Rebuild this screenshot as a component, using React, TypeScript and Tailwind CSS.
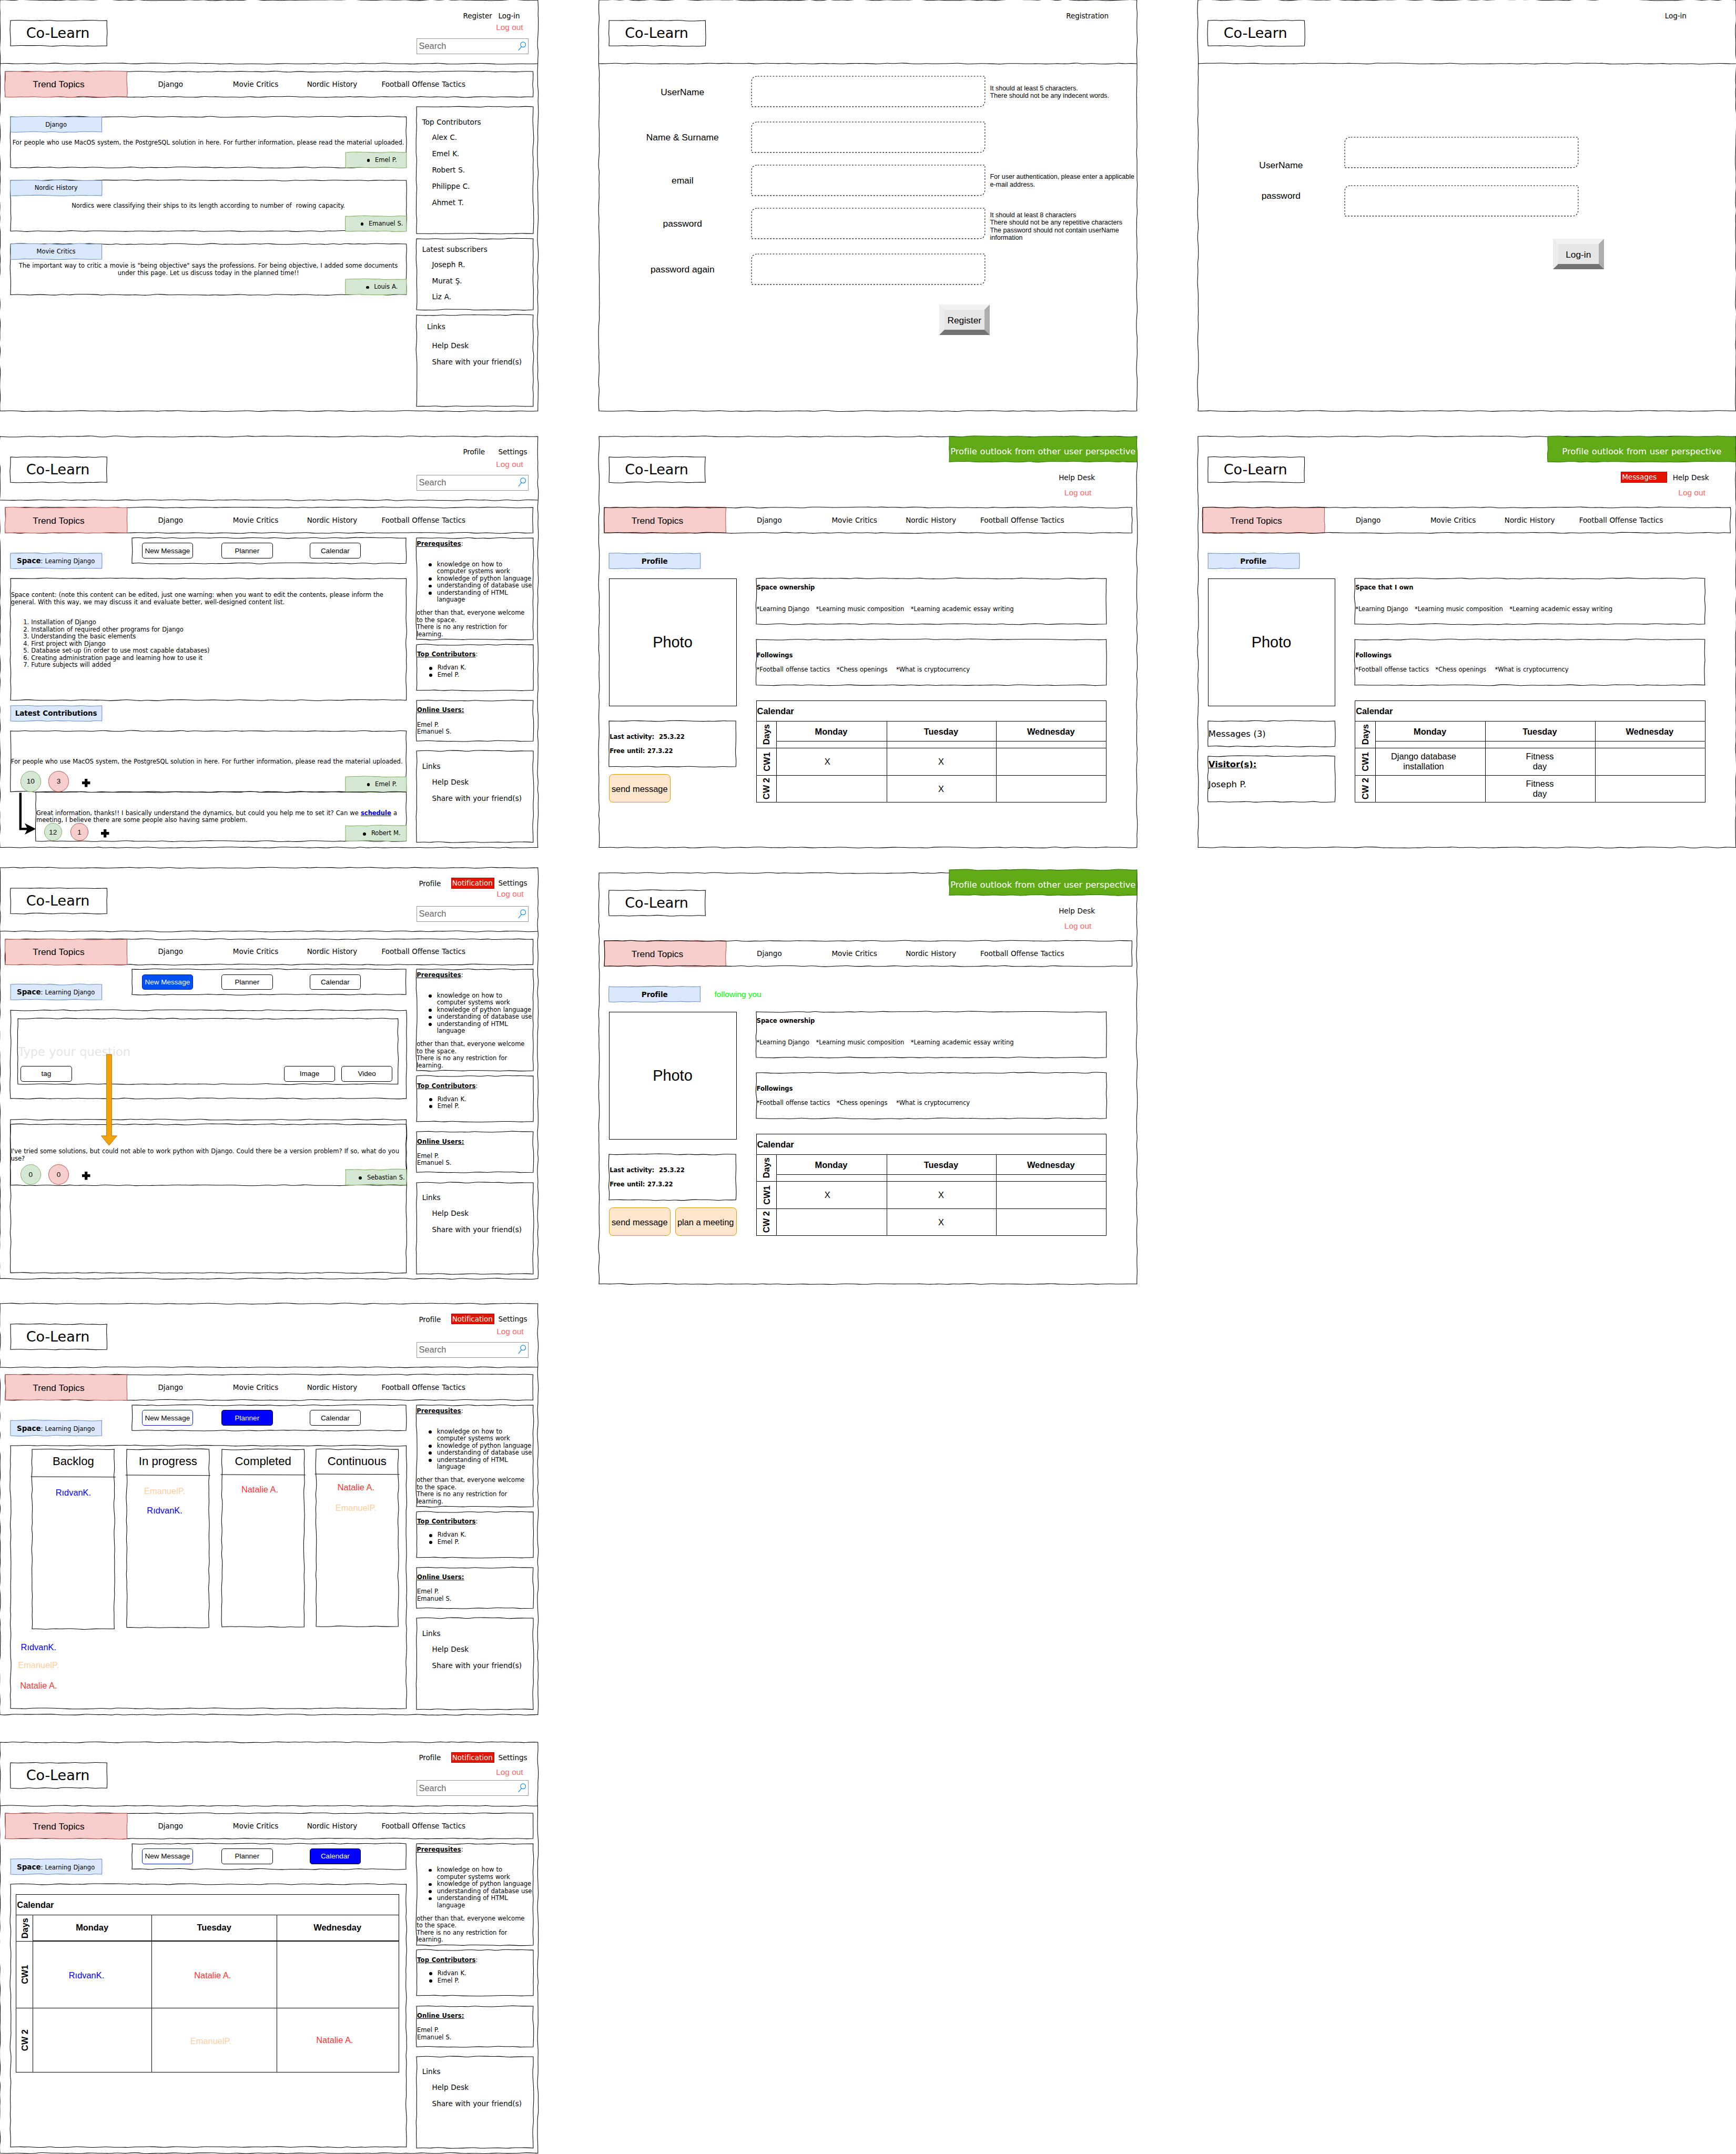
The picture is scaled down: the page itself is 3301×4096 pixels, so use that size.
import type { ReactNode } from "react";
import clsx from "clsx";

const HELV = "font-['Liberation_Sans',Arial,sans-serif] tracking-normal [word-spacing:0]";

/* ---------- hand-drawn outlines ---------- */

function makeRandom(seed: number) {
  let s = seed % 2147483647;
  if (s <= 0) s += 2147483646;
  return () => {
    s = (s * 16807) % 2147483647;
    return s / 2147483647;
  };
}

function wobble(x1: number, y1: number, x2: number, y2: number, rnd: () => number) {
  const len = Math.hypot(x2 - x1, y2 - y1);
  const n = Math.max(2, Math.round(len / 13));
  const nx = -(y2 - y1) / len;
  const ny = (x2 - x1) / len;
  const pts: [number, number][] = [];
  for (let i = 1; i < n; i++) {
    const t = (i + (rnd() - 0.5) * 0.5) / n;
    const o = (rnd() - 0.5) * 2.3;
    pts.push([x1 + (x2 - x1) * t + nx * o, y1 + (y2 - y1) * t + ny * o]);
  }
  let d = "";
  pts.forEach((p, i) => {
    const q = pts[i + 1] ?? [x2, y2];
    const end = pts[i + 1] ? [(p[0] + q[0]) / 2, (p[1] + q[1]) / 2] : q;
    d += `Q${p[0].toFixed(2)} ${p[1].toFixed(2)} ${end[0].toFixed(2)} ${end[1].toFixed(2)}`;
  });
  return d;
}

type SketchProps = {
  w: number;
  h: number;
  className?: string;
  stroke?: string;
  fill?: string;
  seed?: number;
  over?: boolean;
  children?: ReactNode;
};

function Sketch({ w, h, className, stroke = "#000", fill = "none", seed = 1, over, children }: SketchProps) {
  const rnd = makeRandom(seed * 7919 + w * 31 + h * 17);
  const d =
    "M0 0" + wobble(0, 0, w, 0, rnd) + wobble(w, 0, w, h, rnd) + wobble(w, h, 0, h, rnd) + wobble(0, h, 0, 0, rnd) + "Z";
  return (
    <div className={clsx("relative isolate shrink-0", className)}>
      <svg
        viewBox={`0 0 ${w} ${h}`}
        preserveAspectRatio="none"
        className={clsx("pointer-events-none absolute inset-0 size-full overflow-visible", over ? "z-10" : "-z-10")}
      >
        <path d={d} fill={fill} stroke={stroke} strokeWidth="1.1" />
      </svg>
      {children}
    </div>
  );
}

function Rule({ w, seed = 3, straight }: { w: number; seed?: number; straight?: boolean }) {
  return (
    <svg
      viewBox={`0 0 ${w} 10`}
      width={w}
      height={10}
      preserveAspectRatio="none"
      className="-mb-[9px] block max-w-none shrink-0 overflow-visible"
    >
      <path
        d={straight ? `M-2.5 0L${w + 2.5} 0.8` : "M0 0" + wobble(0, 0, w, 0, makeRandom(seed * 977))}
        fill="none"
        stroke="#000"
        strokeWidth="1.1"
      />
    </svg>
  );
}

function Frame({ seed, children, className }: { seed: number; children: ReactNode; className?: string }) {
  return (
    <Sketch w={1060} h={810} seed={seed} className={clsx("flow-root h-[810px] w-[1060px]", className)}>
      {children}
    </Sketch>
  );
}

/* ---------- shared pieces ---------- */

function Logo({ seed = 1 }: { seed?: number }) {
  return (
    <Sketch
      w={190}
      h={50}
      seed={seed}
      className="mt-[40px] ml-[20px] flex h-[50px] w-[190px] items-center justify-center pt-[1px] pr-[3px] text-[28px]"
    >
      Co-Learn
    </Sketch>
  );
}

function SearchBox() {
  return (
    <div className="flex h-[31px] w-[221px] items-center justify-between border border-[#999] pr-[4px] pl-[4px]">
      <span className={clsx(HELV, "text-[17px] text-[#666]")}>Search</span>
      <svg viewBox="0 0 16 19" className="h-[19px] w-[16px]" fill="none" stroke="#008cff" strokeWidth="1.15">
        <circle cx="10" cy="6" r="5.1" />
        <path d="M6.8 10L0.8 17.8" />
      </svg>
    </div>
  );
}

const logOut = clsx(HELV, "text-[16px] leading-[18px] text-[#ff6666]");

function RedBadge({ children, className }: { children: ReactNode; className?: string }) {
  return (
    <span className={clsx("flex h-[21px] items-center border border-[#b20000] bg-[#e51400] pl-[1px] text-white", className)}>
      {children}
    </span>
  );
}

function Header({ links, logoutClass, seed = 1 }: { links: ReactNode; logoutClass: string; seed?: number }) {
  return (
    <>
      <div className="flex h-[125px]">
        <Logo seed={seed} />
        <div className="ml-auto flex w-[240px] flex-col pt-[20px] text-[14px]">
          <div className="flex h-[20px] items-center">{links}</div>
          <div className={clsx("h-[35px]", logoutClass)}>
            <div className={logOut}>Log out</div>
          </div>
          <SearchBox />
        </div>
      </div>
      <Rule w={1060} seed={seed + 5} />
    </>
  );
}

const userLinks = (
  <>
    <span className="w-[68.5px] pt-[1px] pl-[5px]">Profile</span>
    <RedBadge className="w-[85px]">Notification</RedBadge>
    <span className="ml-[8px]">Settings</span>
  </>
);

function Nav({ seed = 1, over }: { seed?: number; over?: boolean }) {
  return (
    <Sketch w={1040} h={50} seed={seed} over={over} className="ml-[10px] flex h-[50px] w-[1040px] items-center text-[14px]">
      <Sketch
        w={240}
        h={50}
        seed={seed + 2}
        fill="#f8cecc"
        stroke="#b85450"
        className={clsx(HELV, "flex h-[50px] w-[240px] items-center justify-center pt-[1px] pr-[30px] text-[18px]")}
      >
        Trend Topics
      </Sketch>
      <span className="ml-[61px] w-[147.5px]">Django</span>
      <span className="w-[146px]">Movie Critics</span>
      <span className="w-[147px]">Nordic History</span>
      <span>Football Offense Tactics</span>
    </Sketch>
  );
}

function BlueTag({ children, className, seed = 1 }: { children: ReactNode; className?: string; seed?: number }) {
  return (
    <Sketch
      w={180}
      h={30}
      seed={seed}
      fill="#dae8fc"
      stroke="#6c8ebf"
      className={clsx("flex h-[30px] w-[180px] items-center justify-center pt-[1px]", className)}
    >
      {children}
    </Sketch>
  );
}

function Bullet({ children, className }: { children: ReactNode; className?: string }) {
  return (
    <span
      className={clsx(
        "relative block before:absolute before:top-[4.5px] before:-left-[16px] before:size-[6px] before:rounded-full before:bg-black",
        className,
      )}
    >
      {children}
    </span>
  );
}

function Author({ children, className, seed = 1 }: { children: ReactNode; className?: string; seed?: number }) {
  return (
    <Sketch
      w={120}
      h={30}
      seed={seed}
      fill="#d5e8d4"
      stroke="#82b366"
      className={clsx("ml-auto flex h-[30px] w-[120px] items-center justify-center pt-[1px] pl-[40px]", className)}
    >
      <Bullet>{children}</Bullet>
    </Sketch>
  );
}

function Vote({ kind, size, children, className }: { kind: "up" | "down"; size: "lg" | "sm"; children: ReactNode; className?: string }) {
  return (
    <span
      className={clsx(
        HELV,
        "flex items-center justify-center rounded-full border text-[14px] leading-none",
        kind === "up" ? "border-[#82b366] bg-[#d5e8d4]" : "border-[#b85450] bg-[#f8cecc]",
        size === "lg" ? "size-[41px]" : "size-[35px]",
        className,
      )}
    >
      {children}
    </span>
  );
}

function Plus({ className }: { className?: string }) {
  return (
    <svg viewBox="0 0 16 16" className={clsx("size-[16px] shrink-0 overflow-visible", className)}>
      <path d="M5.3 0h5.4v5.3H16v5.4h-5.3V16H5.3v-5.3H0V5.3h5.3z" fill="#000" />
    </svg>
  );
}

/* ---------- side panels ---------- */

function LinksPanel({ home }: { home?: boolean }) {
  return (
    <Sketch
      w={230}
      h={180}
      seed={home ? 4 : 9}
      className={clsx(
        "h-[180px] w-[230px] text-[14px] leading-[20px] tracking-[0.003em]",
        home ? "mt-[10px] pt-[14px]" : "mt-[20px] pt-[20px]",
      )}
    >
      <div className={home ? "mb-[11px] pl-[21px]" : "mb-[5px] pl-[11.5px]"}>Links</div>
      <div className="pl-[31px] leading-[32px]">Help Desk</div>
      <div className="pl-[31px] leading-[32px]">Share with your friend(s)</div>
    </Sketch>
  );
}

function PeoplePanel({ w, h, title, names, className }: { w: number; h: number; title: string; names: string[]; className: string }) {
  return (
    <Sketch w={w} h={h} className={clsx("w-[230px] text-[14px] leading-[20px] tracking-normal", className)}>
      <div className="mb-[4px] pl-[11.5px]">{title}</div>
      {names.map((n) => (
        <div key={n} className="pl-[31px] leading-[32px]">
          {n}
        </div>
      ))}
    </Sketch>
  );
}

function SpaceAside() {
  return (
    <aside className="ml-[20px] w-[230px] pt-[10px] text-[12px] leading-[14px] whitespace-nowrap">
      <Sketch w={230} h={200} seed={2} className="h-[200px] w-[230px] pt-[5px] pl-[0.5px]">
        <p>
          <b className="tracking-[0.01em] underline">Prerequsites</b>:
        </p>
        <div className="mt-[26px] mb-[12px] pl-[40px]">
          <Bullet>
            knowledge on how to
            <br />
            computer systems work
          </Bullet>
          <Bullet>knowledge of python language</Bullet>
          <Bullet>understanding of database use</Bullet>
          <Bullet>
            understanding of HTML
            <br />
            language
          </Bullet>
        </div>
        <p>
          other than that, everyone welcome
          <br />
          to the space.
          <br />
          There is no any restriction for
          <br />
          learning.
        </p>
      </Sketch>
      <Sketch w={230} h={90} seed={3} className="mt-[10px] h-[90px] w-[230px] pt-[13px] pl-[1.5px]">
        <p>
          <b className="tracking-[0.01em] underline">Top Contributors</b>:
        </p>
        <div className="mt-[12px] pl-[40px]">
          <Bullet>Rıdvan K.</Bullet>
          <Bullet>Emel P.</Bullet>
        </div>
      </Sketch>
      <Sketch w={230} h={80} seed={4} className="mt-[20px] h-[80px] w-[230px] pt-[13px] pl-[1.5px]">
        <p>
          <b className="tracking-[0.01em] underline">Online Users:</b>
        </p>
        <p className="mt-[14px]">
          Emel P.
          <br />
          Emanuel S.
        </p>
      </Sketch>
      <LinksPanel />
    </aside>
  );
}

/* ---------- space toolbar ---------- */

function ToolButton({ children, className }: { children: ReactNode; className: string }) {
  return (
    <span
      className={clsx(HELV, "flex h-[31px] w-[101px] items-center justify-center rounded-[5px] border pt-[1px] text-[14px]", className)}
    >
      {children}
    </span>
  );
}

const plain = "border-black bg-white text-black";

function Toolbar({ styles, seed = 1 }: { styles: [string, string, string]; seed?: number }) {
  return (
    <div className="flex h-[60px]">
      <BlueTag className="mt-[30px] pr-[1px] text-[12px]" seed={seed}>
        <span>
          <b className="text-[14px]">Space</b>: Learning Django
        </span>
      </BlueTag>
      <Sketch w={540} h={50} seed={seed} className="ml-[60px] flex h-[50px] w-[540px] items-center pl-[19px]">
        <ToolButton className={styles[0]}>New Message</ToolButton>
        <ToolButton className={clsx("ml-[56px]", styles[1])}>Planner</ToolButton>
        <ToolButton className={clsx("ml-[72.5px]", styles[2])}>Calendar</ToolButton>
      </Sketch>
    </div>
  );
}

/* ---------- calendar ---------- */

function Cell({ children, className }: { children?: ReactNode; className?: string }) {
  return <div className={clsx("flex items-center justify-center border-black text-center", className)}>{children}</div>;
}

function Turned({ children, last }: { children: ReactNode; last?: boolean }) {
  return (
    <Cell className={clsx("border-r pl-[1px] font-bold", !last && "border-b")}>
      <span className="-rotate-90 whitespace-nowrap">{children}</span>
    </Cell>
  );
}

function ProfileCalendar({ rows }: { rows: [ReactNode, ReactNode][] }) {
  return (
    <div className={clsx(HELV, "mt-[30px] h-[201px] w-[691px] border border-black text-[17px] leading-[20px]")}>
      <div className="flex h-[40px] items-center border-b border-black pt-[1px] pl-[1px] font-bold">Calendar</div>
      <div className="grid h-[159px] grid-cols-[40px_217px_216px_216px] grid-rows-[53px_54px_52px]">
        <Turned>Days</Turned>
        {["Monday", "Tuesday", "Wednesday"].map((d, i) => (
          <div key={d} className={clsx("border-b border-black", i < 2 && "border-r")}>
            <div className="flex h-[40px] items-center justify-center border-b border-black pt-[2px] pr-[2px] font-bold">{d}</div>
          </div>
        ))}
        <Turned>CW1</Turned>
        <Cell className={clsx("border-r border-b", rows[0][0] === "X" ? "pr-[17px]" : "pr-[27px]")}>{rows[0][0]}</Cell>
        <Cell className="border-r border-b pr-[2px]">{rows[0][1]}</Cell>
        <Cell className="border-b" />
        <Turned last>CW 2</Turned>
        <Cell className="border-r">{rows[1][0]}</Cell>
        <Cell className="border-r pt-[1px] pr-[2px]">{rows[1][1]}</Cell>
        <Cell />
      </div>
    </div>
  );
}

const ridvan = <span className="text-[#0000ff]">RıdvanK.</span>;
const emanuel = <span className="text-[#ffce9f]">EmanuelP.</span>;
const natalie = <span className="text-[#ff3333]">Natalie A.</span>;

/* ---------- screens ---------- */

function HomePost({ tag, author, seed, children }: { tag: string; author: string; seed: number; children: ReactNode }) {
  return (
    <Sketch w={780} h={100} seed={seed} className="flex h-[100px] w-[780px] flex-col text-[12px] leading-[14px]">
      <BlueTag seed={seed}>{tag}</BlueTag>
      <div className="flex h-[40px] items-center justify-center pt-[2px] text-center whitespace-nowrap">
        <p>{children}</p>
      </div>
      <Author seed={seed}>{author}</Author>
    </Sketch>
  );
}

function HomeScreen() {
  return (
    <Frame seed={1}>
      <Header
        seed={1}
        logoutClass="pt-[4.5px] pl-[157px]"
        links={
          <>
            <span className="box-content w-[69.5px] pt-[1px] pl-[92px]">Register</span>
            <span className="pt-[1px]">Log-in</span>
          </>
        }
      />
      <div className="h-[14px]" />
      <Nav seed={1} />
      <div className="flex">
        <div className="flex w-[800px] flex-col gap-[25px] pt-[40px] pl-[20px]">
          <HomePost tag="Django" author="Emel P." seed={1}>
            For people who use MacOS system, the PostgreSQL solution in here. For further information, please read the material
            uploaded.
          </HomePost>
          <HomePost tag="Nordic History" author="Emanuel S." seed={2}>
            Nordics were classifying their ships to its length according to number of&nbsp; rowing capacity.
          </HomePost>
          <HomePost tag="Movie Critics" author="Louis A." seed={3}>
            The important way to critic a movie is "being objective" says the professions. For being objective, I added some
            documents
            <br />
            under this page. Let us discuss today in the planned time!!
          </HomePost>
        </div>
        <aside className="ml-[20px] w-[230px] pt-[20px]">
          <PeoplePanel
            w={230}
            h={250}
            className="h-[250px] pt-[21px]"
            title="Top Contributors"
            names={["Alex C.", "Emel K.", "Robert S.", "Philippe C.", "Ahmet T."]}
          />
          <PeoplePanel
            w={230}
            h={140}
            className="mt-[10px] h-[140px] pt-[11px]"
            title="Latest subscribers"
            names={["Joseph R.", "Murat Ş.", "Liz A."]}
          />
          <LinksPanel home />
        </aside>
      </div>
    </Frame>
  );
}

function SpaceScreen() {
  return (
    <Frame seed={2} className="mt-[50px]">
      <Header
        seed={2}
        logoutClass="pt-[5px] pl-[157px]"
        links={
          <>
            <span className="box-content w-[69.5px] pl-[92px]">Profile</span>
            <span>Settings</span>
          </>
        }
      />
      <div className="h-[14px]" />
      <Nav seed={2} />
      <div className="flex">
        <div className="w-[800px] pt-[10px] pl-[20px] text-[12px] leading-[14px] whitespace-nowrap">
          <Toolbar styles={[plain, plain, plain]} seed={2} />
          <Sketch w={780} h={240} seed={2} className="mt-[20px] h-[240px] w-[780px] pt-[25.5px] pl-[1px]">
            <p>
              Space content: (note this content can be edited, just one warning: when you want to edit the contents, please
              inform the
              <br />
              general. With this way, we may discuss it and evaluate better, well-designed content list.
            </p>
            <ol className="mt-[26px] list-decimal pl-[40px]">
              <li>Installation of Django</li>
              <li>Installation of required other programs for Django</li>
              <li>Understanding the basic elements</li>
              <li>First project with Django</li>
              <li>Database set-up (in order to use most capable databases)</li>
              <li>Creating administration page and learning how to use it</li>
              <li>Future subjects will added</li>
            </ol>
          </Sketch>
          <BlueTag className="mt-[10px] text-[14px] font-bold" seed={5}>
            Latest Contributions
          </BlueTag>
          <Sketch w={780} h={120} seed={6} className="mt-[20px] h-[120px] w-[780px]">
            <p className="h-[80px] pt-[54px] pl-[1px]">
              For people who use MacOS system, the PostgreSQL solution in here. For further information, please read the material
              uploaded.
            </p>
            <div className="flex h-[40px] items-end pl-[19.5px]">
              <Vote kind="up" size="lg">
                10
              </Vote>
              <Vote kind="down" size="lg" className="ml-[14px]">
                3
              </Vote>
              <Plus className="mb-[10px] ml-[26px]" />
              <Author seed={3}>Emel P.</Author>
            </div>
            <svg
              viewBox="0 0 60 90"
              className="absolute top-[120px] left-0 h-[90px] w-[60px] overflow-visible"
              fill="none"
              stroke="#000"
              strokeWidth="4.6"
            >
              <path d="M19.5 1.5V72.8H36" />
              <path d="M50 72.8L28 84L33.5 72.8L28 61.6Z" fill="#000" stroke="none" />
            </svg>
          </Sketch>
          <Sketch w={730} h={97} seed={6} className="ml-[50px] h-[97px] w-[730px]">
            <p className="h-[62px] pt-[35.5px] pl-[1px]">
              Great information, thanks!! I basically understand the dynamics, but could you help me to set it? Can we{" "}
              <b className="text-[#0000ee] underline">schedule</b> a
              <br />
              meeting, I believe there are some people also having same problem.
            </p>
            <div className="flex h-[35px] items-end pl-[16.5px]">
              <Vote kind="up" size="sm">
                12
              </Vote>
              <Vote kind="down" size="sm" className="ml-[17px]">
                1
              </Vote>
              <Plus className="mb-[7.5px] ml-[25px]" />
              <Author seed={4}>Robert M.</Author>
            </div>
          </Sketch>
        </div>
        <SpaceAside />
      </div>
    </Frame>
  );
}

function NewMessageScreen() {
  return (
    <Frame seed={3} className="mt-[40px]">
      <Header seed={3} logoutClass="pt-[2.5px] pl-[158px]" links={userLinks} />
      <div className="h-[14px]" />
      <Nav seed={3} />
      <div className="flex">
        <div className="relative w-[800px] pt-[10px] pl-[20px] text-[12px] leading-[14px] whitespace-nowrap">
          <Toolbar styles={["border-[#001dbc] bg-[#0050ef] text-white", plain, plain]} seed={3} />
          <Sketch w={780} h={174} seed={3} className="mt-[20px] h-[174px] w-[780px] pt-[17px] pl-[15px]">
            <Sketch w={749} h={129} seed={2} className="h-[129px] w-[749px]">
              <p className="h-[93px] pt-[51px] text-[23.3px] leading-[30px] text-[#e6e6e6]">Type your question</p>
              <div className="flex pl-[5px]">
                <ToolButton className={plain}>tag</ToolButton>
                <ToolButton className={clsx("ml-[418px]", plain)}>Image</ToolButton>
                <ToolButton className={clsx("ml-[12px]", plain)}>Video</ToolButton>
              </div>
            </Sketch>
          </Sketch>
          <Sketch w={780} h={302} seed={4} className="mt-[42px] h-[302px] w-[780px] pt-[9px]">
            <Sketch w={780} h={120} seed={5} className="h-[120px] w-[780px]">
              <p className="h-[80px] pt-[47px] pl-[1px]">
                I've tried some solutions, but could not able to work python with Django. Could there be a version problem? If so,
                what do you
                <br />
                use?
              </p>
              <div className="flex h-[40px] items-end pl-[19.5px]">
                <Vote kind="up" size="lg">
                  0
                </Vote>
                <Vote kind="down" size="lg" className="ml-[14px]">
                  0
                </Vote>
                <Plus className="mb-[10px] ml-[26px]" />
                <Author seed={5}>Sebastian S.</Author>
              </div>
            </Sketch>
          </Sketch>
          <svg viewBox="0 0 32 180" className="absolute top-[178px] left-[199px] h-[180px] w-[32px] overflow-visible">
            <path d="M11 0H21V160.5H31.5L16 179.5L0.5 160.5H11Z" fill="#f0a30a" stroke="#bd7000" strokeWidth="1" />
          </svg>
        </div>
        <SpaceAside />
      </div>
    </Frame>
  );
}

function PlannerColumn({
  title,
  h,
  className,
  bodyClass,
  headClass,
  children,
}: {
  title: string;
  h: number;
  className: string;
  bodyClass: string;
  headClass: string;
  children: ReactNode;
}) {
  return (
    <Sketch w={162} h={h} seed={h} className={clsx("w-[162px]", className)}>
      <div className={clsx("pt-[1px] text-center text-[23px] leading-[45px]", headClass)}>{title}</div>
      <Rule w={162} straight />
      <div className={clsx("flex flex-col items-center leading-[20px]", bodyClass)}>{children}</div>
    </Sketch>
  );
}

function PlannerScreen() {
  return (
    <Frame seed={4} className="mt-[49px]">
      <Header seed={4} logoutClass="pt-[5px] pl-[158px]" links={userLinks} />
      <div className="h-[14px]" />
      <Nav seed={4} />
      <div className="flex">
        <div className="w-[800px] pt-[10px] pl-[20px] whitespace-nowrap">
          <Toolbar
            styles={["border-[#001dbc] bg-white text-black", "border-black bg-[#0000ff] text-white", plain]}
            seed={4}
          />
          <Sketch w={780} h={518} seed={4} className={clsx(HELV, "mt-[20px] h-[518px] w-[780px] pt-[7px] text-[17px]")}>
            <div className="flex h-[354px] items-start pl-[43px]">
              <PlannerColumn title="Backlog" h={354} className="h-[354px]" headClass="h-[54px]" bodyClass="pt-[20px]">
                {ridvan}
              </PlannerColumn>
              <PlannerColumn
                title="In progress"
                h={351}
                className="ml-[24.5px] h-[351px]"
                headClass="h-[51px]"
                bodyClass="gap-[19px] pt-[20px] pr-[13px]"
              >
                {emanuel}
                {ridvan}
              </PlannerColumn>
              <PlannerColumn
                title="Completed"
                h={350}
                className="ml-[25.5px] h-[350px]"
                headClass="h-[49.5px]"
                bodyClass="pt-[19px] pr-[13px]"
              >
                {natalie}
              </PlannerColumn>
              <PlannerColumn
                title="Continuous"
                h={349}
                className="ml-[23px] h-[349px]"
                headClass="h-[49px]"
                bodyClass="gap-[21px] pt-[15px] pr-[4px]"
              >
                {natalie}
                {emanuel}
              </PlannerColumn>
            </div>
            <div className="flex w-[111px] flex-col items-center pt-[26px] leading-[20px]">
              {ridvan}
              <span className="mt-[15px]">{emanuel}</span>
              <span className="mt-[21px]">{natalie}</span>
            </div>
          </Sketch>
        </div>
        <SpaceAside />
      </div>
    </Frame>
  );
}

function CalendarScreen() {
  return (
    <Frame seed={5} className="mt-[54px]">
      <Header seed={5} logoutClass="pt-[10px] pl-[157px]" links={userLinks} />
      <div className="h-[14px]" />
      <Nav seed={5} />
      <div className="flex">
        <div className="w-[800px] pt-[10px] pl-[20px] whitespace-nowrap">
          <Toolbar
            styles={["border-[#001dbc] bg-white text-black", plain, "border-black bg-[#0000ff] text-white"]}
            seed={5}
          />
          <Sketch w={780} h={518} seed={5} className={clsx(HELV, "mt-[20px] h-[518px] w-[780px] pt-[20px] pl-[11px]")}>
            <div className="h-[351px] w-[755px] border border-black text-[17px] leading-[20px]">
              <div className="flex h-[40px] items-center border-b border-black pt-[2px] pl-[1px] font-bold">Calendar</div>
              <div className="grid h-[309px] grid-cols-[33px_234px_247px_239px] grid-rows-[52px_131px_126px]">
                <Turned>Days</Turned>
                <Cell className="border-r border-b-[2.2px] pr-[1px] font-bold">Monday</Cell>
                <Cell className="border-r border-b-[2.2px] pr-[1px] font-bold">Tuesday</Cell>
                <Cell className="border-b-[2.2px] pr-[2px] font-bold">Wednesday</Cell>
                <Turned>CW1</Turned>
                <Cell className="border-r border-b pt-[4px] pr-[23px]">{ridvan}</Cell>
                <Cell className="border-r border-b pt-[4px] pr-[7px]">{natalie}</Cell>
                <Cell className="border-b" />
                <Turned last>CW 2</Turned>
                <Cell className="border-r" />
                <Cell className="border-r pt-[4px] pr-[14px]">{emanuel}</Cell>
                <Cell className="pr-[13px]">{natalie}</Cell>
              </div>
            </div>
          </Sketch>
        </div>
        <SpaceAside />
      </div>
    </Frame>
  );
}

function DashedField({ className }: { className?: string }) {
  return (
    <svg viewBox="0 0 460 60" className={clsx("block h-[60px] w-[460px] shrink-0 overflow-visible", className)}>
      <path
        d="M12 0H460V48Q460 60 448 60H0V12Q0 0 12 0Z"
        fill="none"
        stroke="#000"
        strokeWidth="1.1"
        strokeDasharray="3 3"
      />
    </svg>
  );
}

function BevelButton({ children, className }: { children: ReactNode; className?: string }) {
  return (
    <div
      className={clsx(
        HELV,
        "flex h-[60px] w-[100px] items-center justify-center border-[10.4px] border-t-[#f2f2f2] border-r-[#adadad] border-b-[#737373] border-l-[#ededed] bg-[#e6e6e6] pt-[2px] text-[18px] whitespace-nowrap",
        className,
      )}
    >
      {children}
    </div>
  );
}

function PlainHeader({ label, seed }: { label: string; seed: number }) {
  return (
    <>
      <div className="flex h-[125px]">
        <Logo seed={seed} />
        <span className="mt-[21px] ml-auto w-[139.5px] text-[14px] leading-[20px]">{label}</span>
      </div>
      <Rule w={1060} seed={seed + 5} />
    </>
  );
}

function FormRow({ label, hint, className }: { label: string; hint?: ReactNode; className: string }) {
  return (
    <div className={clsx("flex h-[60px] items-center", className)}>
      <span className="w-[300px] pt-[1px] pl-[29px] text-center text-[18px]">{label}</span>
      <DashedField />
      <p className="ml-[10.5px] text-[13px] leading-[15px] whitespace-nowrap">{hint}</p>
    </div>
  );
}

function RegisterScreen() {
  return (
    <Frame seed={6}>
      <PlainHeader label="Registration" seed={6} />
      <div className={HELV}>
        <FormRow
          className="mt-[24px]"
          label="UserName"
          hint={
            <span className="block pt-[2px]">
              It should at least 5 characters.
              <br />
              There should not be any indecent words.
            </span>
          }
        />
        <FormRow className="mt-[30px]" label="Name & Surname" />
        <FormRow
          className="mt-[25px]"
          label="email"
          hint={
            <span className="block pt-[2px]">
              For user authentication, please enter a applicable
              <br />
              e-mail address.
            </span>
          }
        />
        <FormRow
          className="mt-[25px]"
          label="password"
          hint={
            <span className="block pt-[12px]">
              It should at least 8 characters
              <br />
              There should not be any repetitive characters
              <br />
              The password should not contain userName
              <br />
              information
            </span>
          }
        />
        <FormRow className="mt-[30px]" label="password again" />
        <BevelButton className="mt-[40px] ml-[670px]">Register</BevelButton>
      </div>
    </Frame>
  );
}

function LoginScreen() {
  return (
    <Frame seed={7}>
      <PlainHeader label="Log-in" seed={7} />
      <div className={clsx(HELV, "flex pt-[144px] text-[18px] leading-[20px]")}>
        <div className="flex w-[290px] flex-col items-center gap-[40px] pt-[46px] pl-[38px]">
          <span>UserName</span>
          <span>password</span>
        </div>
        <div className="flex flex-col gap-[35px]">
          <DashedField />
          <DashedField />
        </div>
      </div>
      <BevelButton className="mt-[45px] ml-[700px]">Log-in</BevelButton>
    </Frame>
  );
}

function ProfileHeader({ banner, own, seed }: { banner: string; own?: boolean; seed: number }) {
  return (
    <div className="flex h-[140px]">
      <Logo seed={seed} />
      <div className="ml-auto w-[370px] text-[14px]">
        <Sketch
          w={370}
          h={50}
          seed={seed}
          fill="#60a917"
          stroke="#2d7600"
          className="flex h-[50px] w-[370px] items-center justify-center pt-[10px] text-[17px] whitespace-nowrap text-white"
        >
          {banner}
        </Sketch>
        <div className={clsx("mt-[20px] flex h-[20px] items-center", own ? "pl-[144px]" : "pl-[216px]")}>
          {own && <RedBadge className="mr-[11px] w-[91px]">Messages</RedBadge>}
          <span className="pt-[1px]">Help Desk</span>
        </div>
        <div className={clsx(logOut, "mt-[11px]", own ? "pl-[257px]" : "pl-[227px]")}>Log out</div>
      </div>
    </div>
  );
}

function PeachButton({ children }: { children: ReactNode }) {
  return (
    <div className="flex h-[56px] w-[121px] items-center justify-center rounded-[8px] border border-[#d79b00] bg-[#ffe6cc] pt-[2px] pr-[1px]">
      {children}
    </div>
  );
}

function ProfileBody({
  spaceTitle,
  left,
  rows,
  note,
  seed,
}: {
  spaceTitle: string;
  left: ReactNode;
  rows: [ReactNode, ReactNode][];
  note?: ReactNode;
  seed: number;
}) {
  return (
    <>
      <div className="mt-[40px] flex items-center pl-[20px]">
        <BlueTag className="pr-[1px] text-[14px] font-bold" seed={seed}>
          Profile
        </BlueTag>
        {note}
      </div>
      <div className="mt-[20px] flex gap-[39.5px] pl-[20px]">
        <div className="w-[250px]">
          <div className={clsx(HELV, "flex h-[251px] w-[251px] items-center justify-center border border-black pr-[1px] text-[30px]")}>
            Photo
          </div>
          {left}
        </div>
        <div className="w-[691px] text-[12px] leading-[14px] whitespace-pre">
          <Sketch w={690} h={90} seed={seed} className="flex h-[90px] w-[690px] flex-col justify-center pt-[2px] pl-[1px]">
            <p className="-mt-[14px] font-bold">{spaceTitle}</p>
            <p className="mt-[28px]">*Learning Django   *Learning music composition   *Learning academic essay writing</p>
          </Sketch>
          <Sketch w={690} h={90} seed={seed + 1} className="mt-[30px] flex h-[90px] w-[690px] flex-col justify-center pt-[2px] pl-[1px]">
            <p className="font-bold">Followings</p>
            <p className="mt-[14px]">*Football offense tactics   *Chess openings    *What is cryptocurrency</p>
          </Sketch>
          <ProfileCalendar rows={rows} />
        </div>
      </div>
    </>
  );
}

function VisitorLeft({ meeting }: { meeting?: boolean }) {
  return (
    <>
      <Sketch
        w={250}
        h={90}
        seed={meeting ? 8 : 9}
        className="mt-[29px] flex h-[90px] w-[250px] flex-col justify-center gap-[14px] pt-[2px] pl-[1px] text-[12px] leading-[14px] font-bold whitespace-pre"
      >
        <p>Last activity:  25.3.22</p>
        <p>Free until: 27.3.22</p>
      </Sketch>
      <div className={clsx(HELV, "mt-[15px] flex w-[251px] justify-between text-[17px] whitespace-nowrap")}>
        <PeachButton>send message</PeachButton>
        {meeting && <PeachButton>plan a meeting</PeachButton>}
      </div>
    </>
  );
}

const busy: [ReactNode, ReactNode][] = [
  ["X", "X"],
  [null, "X"],
];

const fitness = (
  <span>
    Fitness
    <br />
    day
  </span>
);

function VisitorProfile() {
  return (
    <Frame seed={8} className="mt-[50px]">
      <ProfileHeader banner="Profile outlook from other user perspective" seed={8} />
      <Nav seed={8} over />
      <ProfileBody spaceTitle="Space ownership" left={<VisitorLeft />} rows={busy} seed={8} />
    </Frame>
  );
}

function FollowerProfile() {
  return (
    <Frame seed={9} className="mt-[50px]">
      <div className="-mt-[6px]">
        <ProfileHeader banner="Profile outlook from other user perspective" seed={9} />
        <Nav seed={9} over />
        <ProfileBody
          spaceTitle="Space ownership"
          left={<VisitorLeft meeting />}
          rows={busy}
          seed={9}
          note={<span className={clsx(HELV, "ml-[27.5px] text-[16px] leading-[18px] text-[#00ff00]")}>following you</span>}
        />
      </div>
    </Frame>
  );
}

function OwnProfile() {
  return (
    <Frame seed={10} className="mt-[50px]">
      <ProfileHeader banner="Profile outlook from user perspective" own seed={10} />
      <Nav seed={10} over />
      <ProfileBody
        spaceTitle="Space that I own"
        seed={10}
        left={
          <div className="text-[17px] leading-[20px]">
            <Sketch w={250} h={50} seed={10} className="mt-[29px] flex h-[50px] w-[250px] items-center pt-[1px] pl-[1px]">
              Messages (3)
            </Sketch>
            <Sketch w={250} h={90} seed={11} className="mt-[20px] h-[90px] w-[250px] pt-[6px] pl-[1px]">
              <p className="font-bold underline">Visitor(s):</p>
              <p className="mt-[19px]">Joseph P.</p>
            </Sketch>
          </div>
        }
        rows={[
          [
            <span key="a">
              Django database
              <br />
              installation
            </span>,
            fitness,
          ],
          [null, fitness],
        ]}
      />
    </Frame>
  );
}

export default function App() {
  return (
    <main className="flex h-[4245px] w-[3421px] gap-[120px] overflow-hidden bg-white pt-[0.5px] pl-[0.5px] font-['DejaVu_Sans',Verdana,sans-serif] tracking-[-0.003em] text-black [word-spacing:0.034em] [zoom:0.9649]">
      <div className="w-[1060px] shrink-0">
        <HomeScreen />
        <SpaceScreen />
        <NewMessageScreen />
        <PlannerScreen />
        <CalendarScreen />
      </div>
      <div className="w-[1060px] shrink-0">
        <RegisterScreen />
        <VisitorProfile />
        <FollowerProfile />
      </div>
      <div className="w-[1060px] shrink-0">
        <LoginScreen />
        <OwnProfile />
      </div>
    </main>
  );
}
